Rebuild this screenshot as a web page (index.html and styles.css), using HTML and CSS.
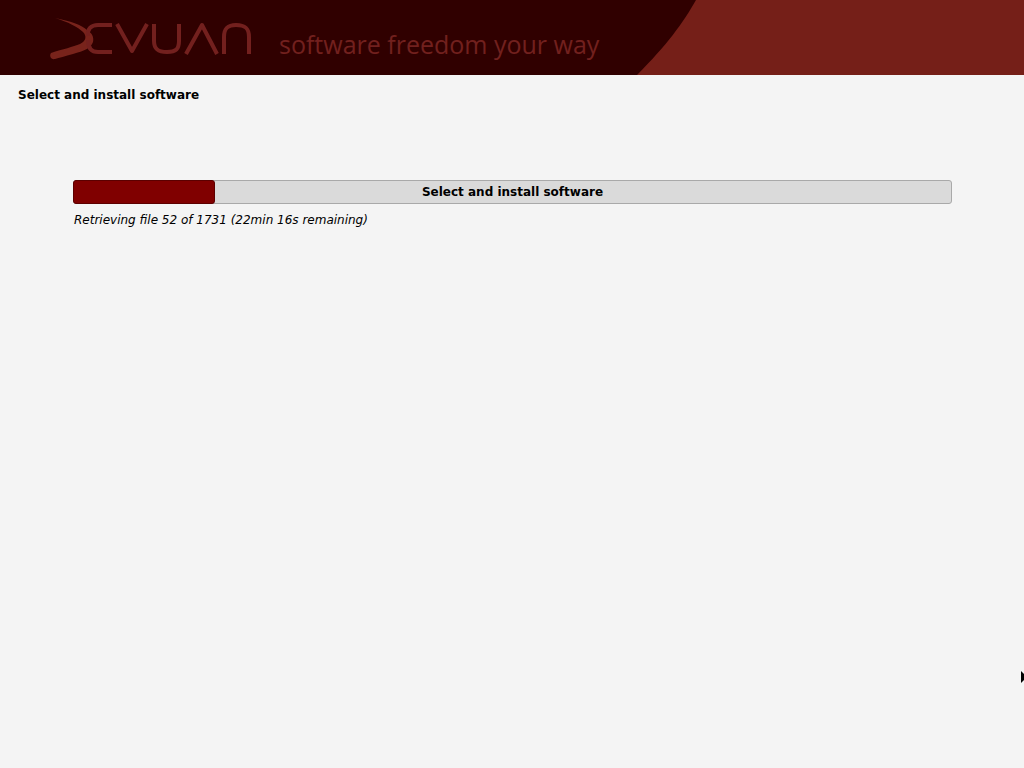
FILE: index.html
```html
<!DOCTYPE html>
<html lang="en">
<head>
<meta charset="utf-8">
<title>Devuan installer</title>
<link rel="stylesheet" href="styles.css">
</head>
<body>
<header class="banner">
  <svg class="banner-curve" viewBox="0 0 387 75" aria-hidden="true">
    <path d="M59 0C46 23 30 45 0 75H387V0Z" fill="#751f18"/>
  </svg>
  <svg class="logo" viewBox="0 0 204 44" role="img" aria-label="Devuan">
    <path d="M5 2C20 5 32 9 37 14C42 17 44 21 43 26C41 32 34 35 23 38C15 40 9 42 5 43C1 44 -1 40 1 37C13 33 23 31 30 28C36 25 37 20 33 16C28 11 18 6 5 2Z" fill="#78231b"/>
    <g fill="none" stroke="#73201e" stroke-width="4">
      <path d="M62 9H48C41 9 37 13 38 20M38 24C38 32 41 36 48 36H62"/>
      <path d="M67 8L82 35L97 8" stroke-linejoin="round"/>
      <path d="M104 8V25C104 33 108 36 117 36C126 36 129 33 129 25V8"/>
      <path d="M136 38L152 9L167 38" stroke-linejoin="round"/>
      <path d="M174 38V21C174 12 178 9 186 9C195 9 199 12 199 21V38"/>
    </g>
  </svg>
  <span class="tagline">software freedom your way</span>
</header>
<main class="page">
  <h1 class="title">Select and install software</h1>
  <section class="task">
    <div class="meter" role="progressbar" aria-labelledby="task-name" aria-valuenow="16" aria-valuemin="0" aria-valuemax="100">
      <div class="meter-fill" style="width: 16.2%"></div>
      <span class="meter-label" id="task-name">Select and install software</span>
    </div>
    <p class="status">Retrieving file 52 of 1731 (22min 16s remaining)</p>
  </section>
</main>
<svg class="pointer" viewBox="0 0 4 12" aria-hidden="true"><path d="M1 0L4 3V9L1 12Z" fill="#000"/></svg>
</body>
</html>
```
FILE: styles.css
```css
* {
  box-sizing: border-box;
}

body {
  margin: 0;
  min-height: 100vh;
  overflow-x: hidden;
  background: #f4f4f4;
  color: #000;
  font: 12px/16px "DejaVu Sans", sans-serif;
}

.banner {
  position: relative;
  display: flex;
  align-items: center;
  gap: 25px;
  height: 75px;
  padding-left: 50px;
  background: #300000;
  overflow: hidden;
}

.banner-curve {
  position: absolute;
  top: 0;
  right: 0;
  height: 100%;
}

.logo {
  width: 204px;
  height: 44px;
  overflow: visible;
}

.tagline {
  padding-top: 12px;
  color: #72201e;
  font: 25px/32px "Open Sans", sans-serif;
  white-space: nowrap;
}

.page {
  padding: 12px 18px;
}

.title {
  margin: 0;
  font-size: 12px;
  line-height: 16px;
}

.task {
  padding: 77px 54px 0 55px;
}

.meter {
  position: relative;
  display: grid;
  place-items: center;
  height: 24px;
  border: 1px solid #a9a9a9;
  border-radius: 3px;
  background: #dadada;
}

.meter-fill {
  position: absolute;
  top: -1px;
  bottom: -1px;
  left: -1px;
  border: 1px solid #5c0000;
  border-radius: 3px;
  background: #800000;
}

.meter-label {
  position: relative;
  font-weight: bold;
}

.status {
  margin: 8px 1px 0;
  font-style: italic;
}

.pointer {
  position: absolute;
  top: 671px;
  right: 0;
  width: 4px;
  height: 12px;
}
```
